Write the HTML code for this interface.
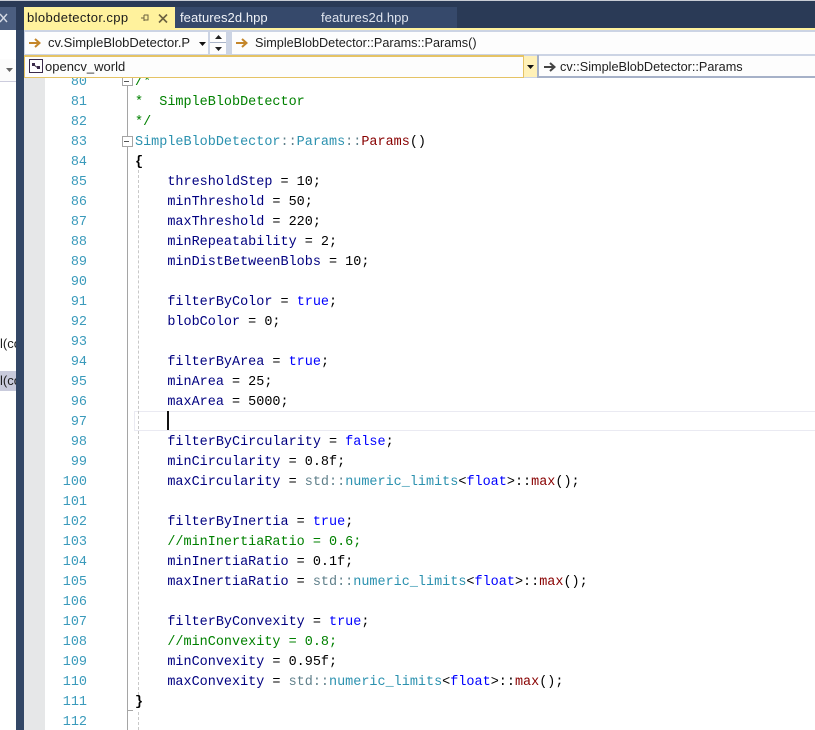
<!DOCTYPE html>
<html><head><meta charset="utf-8"><style>
html,body{margin:0;padding:0;background:#fff}
#p{position:relative;width:815px;height:730px;overflow:hidden;background:#fff;font-family:"Liberation Sans",sans-serif}
#p div{position:absolute}
.t{font-size:13px;line-height:20px;white-space:nowrap;color:#1e1e1e}
pre{position:absolute;margin:0;font-family:"Liberation Mono",monospace;font-size:13.47px;line-height:20px}
#code{left:135px;color:#000080}
#nums{left:50px;width:37px;text-align:right;color:#3a9abb}
.g{color:#008000}.b{color:#0000ff}.k{color:#000}.c{color:#2b91af}.r{color:#880000}.s{color:#5f7f8a}
</style></head><body><div id="p">
<div style="left:0;top:0;width:815px;height:30px;background:#2a3a56"></div>
<div style="left:0;top:0;width:815px;height:1px;background:#c8ccd4"></div>
<div style="left:0;top:7px;width:16px;height:23px;background:#4b5e80"></div>
<div style="left:0;top:30px;width:16px;height:700px;background:#fff"></div>
<div style="left:16px;top:30px;width:8px;height:700px;background:#334766"></div>
<svg style="position:absolute;left:0;top:13px" width="9" height="11"><path d="M0 1L7 9M7 1L0 9" stroke="#d5dae4" stroke-width="1.4" fill="none"/></svg>
<div style="left:0;top:59px;width:16px;height:22px;background:#fcfcfc;border-bottom:1px solid #ccd"></div>
<svg style="position:absolute;left:6px;top:68px" width="7" height="4"><path d="M0 0H7L3.5 4Z" fill="#666"/></svg>
<div class="t" style="left:0;top:334px;width:16px;overflow:hidden;font-size:13px">l(co</div>
<div style="left:0;top:371px;width:16px;height:20px;background:#c9cbdc"></div>
<div class="t" style="left:0;top:371px;width:16px;overflow:hidden;font-size:13px">l(co</div>

<div style="left:24px;top:7px;width:151px;height:21px;background:#fff29d"></div>
<div style="left:175px;top:7px;width:282px;height:21px;background:#36496b"></div>
<div class="t" style="left:27px;top:8px;font-size:13px;letter-spacing:.38px;color:#1a1a1a">blobdetector.cpp</div>
<div class="t" style="left:180px;top:8px;font-size:13px;letter-spacing:.07px;color:#f0f3f8">features2d.hpp</div>
<div class="t" style="left:321px;top:8px;font-size:13px;letter-spacing:.07px;color:#dfe4ee">features2d.hpp</div>
<svg style="position:absolute;left:140px;top:13px" width="10" height="10"><path d="M1 5H4M4 2V8M4 2H8V7H4M5 7H8" stroke="#6b6140" fill="none"/></svg>
<svg style="position:absolute;left:158px;top:14px" width="11" height="10"><path d="M1 0.5L9 8.5M9 0.5L1 8.5" stroke="#6b6140" stroke-width="1.6" fill="none"/></svg>

<div style="left:24px;top:28px;width:791px;height:2px;background:#fff29d"></div>
<div style="left:24px;top:30px;width:791px;height:48px;background:#ccd4e4"></div>
<div style="left:25px;top:32px;width:183px;height:22px;background:#fdfdfd"></div>
<div style="left:210px;top:32px;width:16px;height:22px;background:#fdfdfd"></div>
<div style="left:210px;top:42px;width:16px;height:1px;background:#a9b4c8"></div>
<svg style="position:absolute;left:215px;top:35px" width="7" height="16"><path d="M3.5 0L7 4H0ZM0 12H7L3.5 16Z" fill="#222"/></svg>
<div style="left:232px;top:32px;width:583px;height:22px;background:#fdfdfd"></div>
<svg style="position:absolute;left:29px;top:38px" width="12" height="10"><path d="M0 5H10M6 1L10.5 5L6 9" stroke="#c4862a" stroke-width="2" fill="none"/></svg>
<svg style="position:absolute;left:236px;top:38px" width="12" height="10"><path d="M0 5H10M6 1L10.5 5L6 9" stroke="#c4862a" stroke-width="2" fill="none"/></svg>
<div class="t" style="left:48px;top:33px;width:142px;overflow:hidden;font-size:13px">cv.SimpleBlobDetector.P</div>
<div class="t" style="left:255px;top:33px;font-size:12.67px">SimpleBlobDetector::Params::Params()</div>
<svg style="position:absolute;left:199px;top:42px" width="7" height="4"><path d="M0 0H7L3.5 4Z" fill="#111"/></svg>

<div style="left:24px;top:55px;width:500px;height:23px;background:#e5c365"></div>
<div style="left:25px;top:57px;width:498px;height:20px;background:#fdfdfd"></div>
<div style="left:524px;top:56px;width:13px;height:21px;background:#fff1b8"></div>
<svg style="position:absolute;left:527px;top:65px" width="7" height="4"><path d="M0 0H7L3.5 4Z" fill="#111"/></svg>
<div style="left:537px;top:55px;width:2px;height:23px;background:#a6b1c8"></div>
<div style="left:539px;top:56px;width:276px;height:20px;background:#fdfdfd"></div>
<div style="left:539px;top:76px;width:276px;height:2px;background:#a6b1c8"></div>
<svg style="position:absolute;left:29px;top:59px" width="14" height="14"><rect x=".5" y=".5" width="13" height="13" fill="#fff" stroke="#3a2a4a"/><path d="M3 4H6V7H3ZM8 7H11V10H8Z" fill="#3a2a4a"/><path d="M5 6L9 9" stroke="#3a2a4a"/></svg>
<div class="t" style="left:45px;top:57px;font-size:13px">opencv_world</div>
<svg style="position:absolute;left:544px;top:62px" width="12" height="10"><path d="M0 5H10M6 1L10.5 5L6 9" stroke="#444" stroke-width="2" fill="none"/></svg>
<div class="t" style="left:560px;top:57px;font-size:12.7px">cv::SimpleBlobDetector::Params</div>

<div style="left:24px;top:78px;width:21px;height:652px;background:#e6e7e8"></div>
<div style="left:127px;top:78px;width:1px;height:652px;background:#a5a5a5"></div>
<div style="left:134px;top:411px;width:681px;height:18px;border:1px solid #eaeaf2;border-right:0"></div>
<div style="left:138px;top:170px;width:0;height:530px;border-left:1px dashed #c8c8c8"></div>
<div style="left:138px;top:712px;width:0;height:18px;border-left:1px dashed #c8c8c8"></div>
<div style="left:127px;top:710px;width:6px;height:1px;background:#a5a5a5"></div>
<div style="left:122px;top:78px;width:9px;height:7px;background:#fff;border:1px solid #a5a5a5;border-top:0"></div>
<div style="left:124px;top:81px;width:5px;height:1px;background:#555"></div>
<div style="left:122px;top:136px;width:9px;height:9px;background:#fff;border:1px solid #a5a5a5"></div>
<div style="left:124px;top:141px;width:5px;height:1px;background:#555"></div>
<div style="left:167px;top:411px;width:2px;height:19px;background:#111"></div>

<div style="left:0;top:78px;width:815px;height:652px;overflow:hidden">
<pre id="nums" style="top:-5px">80
81
82
83
84
85
86
87
88
89
90
91
92
93
94
95
96
97
98
99
100
101
102
103
104
105
106
107
108
109
110
111
112</pre>
<pre id="code" style="top:-5px"><span class="g">/*
*  SimpleBlobDetector
*/</span>
<span class="c">SimpleBlobDetector</span><span class="s">::</span><span class="c">Params</span><span class="s">::</span><span class="r">Params</span><span class="k">()</span>
<span class="k"><b>{</b></span>
    thresholdStep <span class="k">= 10;</span>
    minThreshold <span class="k">= 50;</span>
    maxThreshold <span class="k">= 220;</span>
    minRepeatability <span class="k">= 2;</span>
    minDistBetweenBlobs <span class="k">= 10;</span>

    filterByColor <span class="k">=</span> <span class="b">true</span><span class="k">;</span>
    blobColor <span class="k">= 0;</span>

    filterByArea <span class="k">=</span> <span class="b">true</span><span class="k">;</span>
    minArea <span class="k">= 25;</span>
    maxArea <span class="k">= 5000;</span>

    filterByCircularity <span class="k">=</span> <span class="b">false</span><span class="k">;</span>
    minCircularity <span class="k">= 0.8f;</span>
    maxCircularity <span class="k">=</span> <span class="s">std::</span><span class="c">numeric_limits</span><span class="k">&lt;</span><span class="b">float</span><span class="k">&gt;::</span><span class="r">max</span><span class="k">();</span>

    filterByInertia <span class="k">=</span> <span class="b">true</span><span class="k">;</span>
    <span class="g">//minInertiaRatio = 0.6;</span>
    minInertiaRatio <span class="k">= 0.1f;</span>
    maxInertiaRatio <span class="k">=</span> <span class="s">std::</span><span class="c">numeric_limits</span><span class="k">&lt;</span><span class="b">float</span><span class="k">&gt;::</span><span class="r">max</span><span class="k">();</span>

    filterByConvexity <span class="k">=</span> <span class="b">true</span><span class="k">;</span>
    <span class="g">//minConvexity = 0.8;</span>
    minConvexity <span class="k">= 0.95f;</span>
    maxConvexity <span class="k">=</span> <span class="s">std::</span><span class="c">numeric_limits</span><span class="k">&lt;</span><span class="b">float</span><span class="k">&gt;::</span><span class="r">max</span><span class="k">();</span>
<span class="k"><b>}</b></span></pre>
</div>
</div></body></html>
